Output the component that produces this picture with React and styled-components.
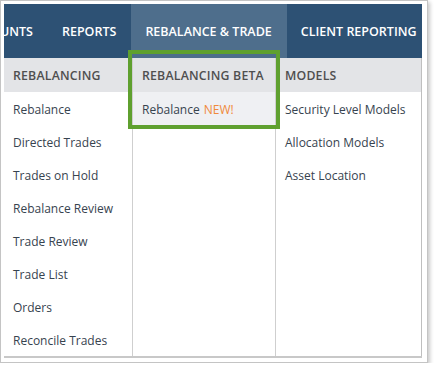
import styled, { createGlobalStyle } from 'styled-components';

const GlobalStyle = createGlobalStyle`
  body {
    margin: 0;
    background: #fff;
    font-family: "Open Sans", "Liberation Sans", sans-serif;
  }
  * { box-sizing: border-box; }
`;

const tabs = [
  { label: 'ACCOUNTS' },
  { label: 'REPORTS' },
  { label: 'REBALANCE & TRADE', active: true },
  { label: 'CLIENT REPORTING' },
];

const columns = [
  {
    title: 'REBALANCING',
    width: 129,
    items: [
      'Rebalance',
      'Directed Trades',
      'Trades on Hold',
      'Rebalance Review',
      'Trade Review',
      'Trade List',
      'Orders',
      'Reconcile Trades',
    ],
  },
  {
    title: 'REBALANCING BETA',
    width: 143,
    items: [{ label: 'Rebalance', badge: 'NEW!', selected: true }],
  },
  {
    title: 'MODELS',
    width: 146,
    items: ['Security Level Models', 'Allocation Models', 'Asset Location'],
  },
];

export default function App() {
  return (
    <>
      <GlobalStyle />
      <Frame>
        <NavBar>
          <TabList>
            {tabs.map((tab) => (
              <Tab key={tab.label} $active={tab.active}>
                {tab.label}
              </Tab>
            ))}
          </TabList>
        </NavBar>

        <Dropdown>
          {columns.map((col, i) => (
            <Column key={col.title} $width={col.width} $last={i === columns.length - 1}>
              <ColumnHeader>{col.title}</ColumnHeader>
              {col.items.map((item) => {
                const it = typeof item === 'string' ? { label: item } : item;
                return (
                  <MenuItem key={it.label} $selected={it.selected}>
                    {it.label}
                    {it.badge && <Badge>{it.badge}</Badge>}
                  </MenuItem>
                );
              })}
            </Column>
          ))}
          <Highlight />
        </Dropdown>
      </Frame>
    </>
  );
}

const Frame = styled.div`
  width: 428px;
  height: 363px;
  border: 1px solid #c4c4c4;
  padding: 3px 5px 4px 3px;
  background: #fff;
  box-shadow: 2px 2px 4px rgba(0, 0, 0, 0.22);
  display: flex;
  flex-direction: column;
`;

const NavBar = styled.div`
  height: 54px;
  background: #2d5174;
  overflow: hidden;
  flex-shrink: 0;
`;

const TabList = styled.div`
  display: flex;
  height: 100%;
  margin-left: -52px;
`;

const Tab = styled.div`
  display: flex;
  align-items: center;
  height: 100%;
  padding: 0 15px 0 14px;
  white-space: nowrap;
  flex-shrink: 0;
  color: #fff;
  font-size: 12.5px;
  font-weight: 600;
  background: ${(p) => (p.$active ? '#4e6e8c' : 'transparent')};
`;

const Dropdown = styled.div`
  position: relative;
  display: flex;
  flex: 1;
  border-bottom: 2px solid #c8c8c8;
  margin-bottom: 1px;
`;

const Column = styled.div`
  width: ${(p) => p.$width}px;
  display: flex;
  flex-direction: column;
  border-right: 1px solid ${(p) => (p.$last ? '#bfbfbf' : '#cfcfcf')};
  background: #fff;
`;

const ColumnHeader = styled.div`
  height: 34px;
  display: flex;
  align-items: center;
  padding-left: 9px;
  background: #e3e4e7;
  color: #4f4f4f;
  font-size: 12.3px;
  font-weight: 600;
  letter-spacing: 0.2px;
  white-space: nowrap;
`;

const MenuItem = styled.div`
  height: 33px;
  display: flex;
  align-items: center;
  padding-left: 9px;
  padding-top: 1px;
  font-size: 12px;
  color: #37434f;
  white-space: nowrap;
  background: ${(p) => (p.$selected ? '#eff0f3' : 'transparent')};
`;

const Badge = styled.span`
  margin-left: 4px;
  color: #f08a3c;
`;

const Highlight = styled.div`
  position: absolute;
  left: 124px;
  top: -8px;
  width: 152px;
  height: 79px;
  border: 4px solid #5fa02f;
  pointer-events: none;
`;
